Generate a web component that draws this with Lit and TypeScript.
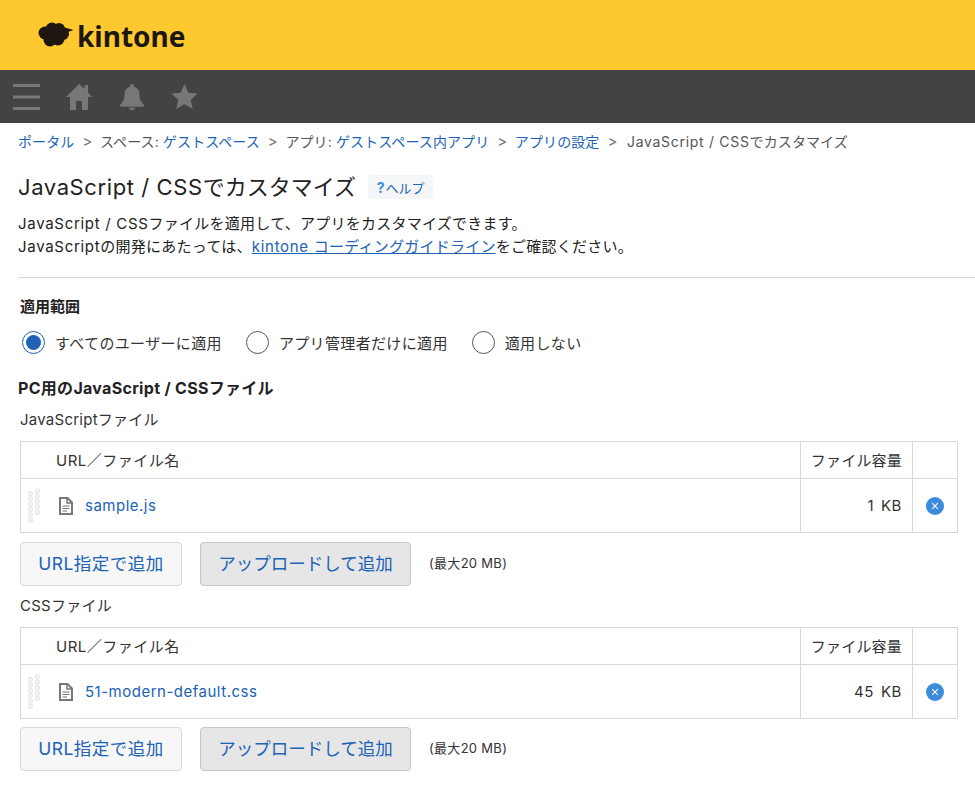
import { LitElement, html, css, svg } from "lit";
import { customElement } from "lit/decorators.js";

const grip = svg`<svg class="grip" width="14" height="36" viewBox="0 0 14 36">
${[0,1,2,3,4,5].map(i => svg`<rect x="1.500" y="${3.500 + i*5.4}" width="3.800" height="3.800" rx=".8" fill="#f6f6f6" stroke="#dcdcdc" stroke-width=".8"/>`)}
${[0,1,2,3,4].map(i => svg`<rect x="8.500" y="${1 + i*5.4}" width="3.800" height="3.800" rx=".8" fill="#f6f6f6" stroke="#dcdcdc" stroke-width=".8"/>`)}
</svg>`;

const fileIcon = html`<svg class="file" width="14" height="18" viewBox="0 0 14 18">
<path d="M1 1h7.500L13 5.500V17H1z" fill="#fff" stroke="#777" stroke-width="2"/>
<path d="M8 1v5h5" fill="none" stroke="#777" stroke-width="1.500"/>
<path d="M3.500 9h7M3.500 11.500h7M3.500 14h4.500" stroke="#777" stroke-width="1.100"/>
</svg>`;

const removeIcon = html`<svg width="18" height="18" viewBox="0 0 18 18">
<circle cx="9" cy="9" r="9" fill="#3c8bdc"/>
<path d="M6.200 6.200l5.600 5.600M11.800 6.200l-5.600 5.600" stroke="#fff" stroke-width="1.100"/>
</svg>`;

@customElement("app-root")
export class AppRoot extends LitElement {
  static styles = css`
    :host {
      display: block;
      height: 789px;
      overflow: hidden;
      background: #fff;
      color: #333;
      font-family: Inter, "Noto Sans CJK JP", sans-serif;
      font-size: 14px;
    }
    a { color: #2062b5; text-decoration: none; }
    .top { height: 70px; background: #fdc92f; display: flex; align-items: center; padding-left: 38px; box-sizing: border-box; }
    .logo { display: flex; align-items: center; gap: 3px; }
    .logo-text { font-family: "Noto Sans", sans-serif; font-weight: 700; font-size: 28px; line-height: 30px; color: #1d1611; margin-top: 2px; }
    .nav { height: 53px; background: #434343; display: flex; align-items: center; padding-left: 13px; gap: 26px; box-sizing: border-box; }
    .bell { margin-left: 1px; }
    .crumbs { display: flex; align-items: center; height: 20px; margin: 9px 0 0 18px; color: #555; white-space: nowrap; line-height: 20px; letter-spacing: .1px; }
    .crumbs .l { letter-spacing: .7px; }
    .last { margin-left: 2px; }
    .sep { margin: 0 7.500px 0 8px; color: #777; font-size: 15px; }
    .title-row { display: flex; align-items: center; margin: 20px 0 0 18px; height: 30px; }
    h1 { margin: 0; font-size: 22px; font-weight: 400; line-height: 30px; color: #222; white-space: nowrap; }
    h1 .l { letter-spacing: .6px; }
    .help { margin-left: 12px; height: 24px; width: 65px; display: flex; align-items: center; justify-content: center; background: #f5f6f7; border-radius: 4px; color: #2062b5; font-size: 13px; }
    .help b { color: #3c8bdc; font-size: 14px; margin-right: 1px; }
    .desc { margin: 10px 0 0 18px; line-height: 23px; color: #222; font-size: 15px; white-space: nowrap; letter-spacing: .25px; }
    .desc .l { letter-spacing: .7px; }
    .desc a { text-decoration: underline; }
    hr { border: 0; border-top: 1px solid #d8d8d8; margin: 19px 0 0 18px; }
    .scope { margin: 19px 0 0 20px; font-weight: 700; font-size: 15px; line-height: 20px; color: #222; }
    .radios { display: flex; align-items: center; margin: 12px 0 0 22px; height: 26px; font-size: 15px; letter-spacing: .35px; }
    .radio { display: flex; align-items: center; margin-right: 24px; color: #333; }
    .dot { width: 23px; height: 23px; border-radius: 50%; border: 1px solid #555; box-sizing: border-box; margin-right: 10px; background: #fff; }
    .dot.on { border: 1px solid #2062b5; display: flex; align-items: center; justify-content: center; }
    .dot.on::after { content: ""; width: 15px; height: 15px; border-radius: 50%; background: #2062b5; }
    .pc { margin: 23px 0 0 18px; font-weight: 700; font-size: 16px; line-height: 20px; color: #222; letter-spacing: .3px; }
    .sub { margin: 12px 0 0 20px; font-size: 15px; line-height: 20px; color: #333; letter-spacing: .25px; }
    .sub.css { margin-top: 10px; }
    .tbl { margin: 11px 0 0 20px; width: 938px; box-sizing: border-box; border: 1px solid #d8d8d8; display: grid; grid-template-columns: 779px 112px 1fr; grid-template-rows: 37px 53px; }
    .cell { box-sizing: border-box; display: flex; align-items: center; color: #333; font-size: 15px; }
    .head { border-bottom: 1px solid #d8d8d8; padding-bottom: 2px; }
    .v { border-left: 1px solid #d8d8d8; }
    .name-h { padding-left: 35px; letter-spacing: .5px; }
    .size { justify-content: flex-end; padding-right: 10px; letter-spacing: .2px; }
    .kb { letter-spacing: .6px; word-spacing: 2px; }
    .name { padding-left: 6px; }
    .grip { flex: none; }
    .file { margin-left: 18px; flex: none; }
    .name a { margin-left: 12px; font-size: 15px; letter-spacing: .5px; }
    .rm { justify-content: center; padding-top: 1px; }
    .btns { display: flex; align-items: center; margin: 9px 0 0 20px; }
    .btns.tight { margin-top: 8px; }
    .btn { height: 44px; box-sizing: border-box; border: 1px solid #d8d8d8; border-radius: 4px; background: #f7f7f7; color: #2062b5; font-size: 17.500px; display: flex; align-items: center; justify-content: center; width: 162px; letter-spacing: .5px; padding-bottom: 3px; }
    .btn.up { width: 211px; margin-left: 18px; background: #e6e6e6; border-color: #c6c6c6; letter-spacing: 0; }
    .limit { margin-left: 18px; font-size: 13px; color: #333; letter-spacing: .3px; padding-bottom: 3px; }
  `;

  private section(file: string, size: string, tight = false) {
    return html`
      <div class="tbl">
        <div class="cell head name-h">URL／ファイル名</div>
        <div class="cell head v size">ファイル容量</div>
        <div class="cell head v"></div>
        <div class="cell name">${grip}${fileIcon}<a href="#">${file}</a></div>
        <div class="cell v size kb">${size}</div>
        <div class="cell v rm">${removeIcon}</div>
      </div>
      <div class="btns ${tight ? "tight" : ""}">
        <div class="btn">URL指定で追加</div>
        <div class="btn up">アップロードして追加</div>
        <div class="limit">(最大20 MB)</div>
      </div>`;
  }

  render() {
    return html`
      <div class="top">
        <div class="logo">
          <svg width="36" height="26" viewBox="0 0 36 26">
            <g fill="#1d1611">
              <circle cx="7" cy="11" r="6.500"/>
              <circle cx="14" cy="7" r="6.500"/>
              <circle cx="21" cy="7" r="6"/>
              <circle cx="25" cy="12" r="6"/>
              <circle cx="20" cy="17" r="6.500"/>
              <circle cx="12" cy="18" r="6.500"/>
              <path d="M25 5L35.500 8 27 11z"/>
            </g>
          </svg>
          <span class="logo-text">kintone</span>
        </div>
      </div>
      <div class="nav">
        <svg width="27" height="26" viewBox="0 0 27 26"><path d="M0 0h27v3H0zM0 11.500h27v3H0zM0 23h27v3H0z" fill="#777"/></svg>
        <svg width="26" height="26" viewBox="0 0 26 26"><path d="M13 0L18.500 5V1H22V8.500L26 13H22V26H16V17H10V26H4V13H0Z" fill="#777"/></svg>
        <svg class="bell" width="26" height="26" viewBox="0 0 28 28"><path d="M14 0c1.200 0 2 .8 2 2v1c4 1 6 4 6 8 0 6 2 9 5 11.500 .5 1-.5 2-1.500 2H2.500C1.500 24.500 .5 23.500 1 22.500 4 20 6 17 6 11c0-4 2-7 6-8V2c0-1.200.8-2 2-2zM10.500 25.500h7C17 27 15.500 28 14 28s-3-1-3.500-2.500z" fill="#777"/></svg>
        <svg width="27" height="27" viewBox="0 0 28 28"><path d="M14 1l4 9 9.500 1-7 6.500 2 9.500-8.500-5-8.500 5 2-9.500-7-6.500 9.500-1z" fill="#777"/></svg>
      </div>
      <div class="crumbs">
        <a href="#">ポータル</a><span class="sep">&gt;</span>
        <span>スペース:&nbsp;</span><a href="#">ゲストスペース</a><span class="sep">&gt;</span>
        <span>アプリ:&nbsp;</span><a href="#">ゲストスペース内アプリ</a><span class="sep">&gt;</span>
        <a href="#">アプリの設定</a><span class="sep">&gt;</span>
        <span class="last"><span class="l">JavaScript / CSS</span>でカスタマイズ</span>
      </div>
      <div class="title-row">
        <h1><span class="l">JavaScript / CSS</span>でカスタマイズ</h1>
        <div class="help"><b>?</b>ヘルプ</div>
      </div>
      <div class="desc">
        <span class="l">JavaScript / CSS</span>ファイルを適用して、アプリをカスタマイズできます。<br />
        <span class="l">JavaScript</span>の開発にあたっては、<a href="#"><span class="l">kintone </span>コーディングガイドライン</a>をご確認ください。
      </div>
      <hr />
      <div class="scope">適用範囲</div>
      <div class="radios">
        <div class="radio"><span class="dot on"></span>すべてのユーザーに適用</div>
        <div class="radio"><span class="dot"></span>アプリ管理者だけに適用</div>
        <div class="radio"><span class="dot"></span>適用しない</div>
      </div>
      <div class="pc">PC用のJavaScript / CSSファイル</div>
      <div class="sub">JavaScriptファイル</div>
      ${this.section("sample.js", "1 KB")}
      <div class="sub css">CSSファイル</div>
      ${this.section("51-modern-default.css", "45 KB", true)}
    `;
  }
}
